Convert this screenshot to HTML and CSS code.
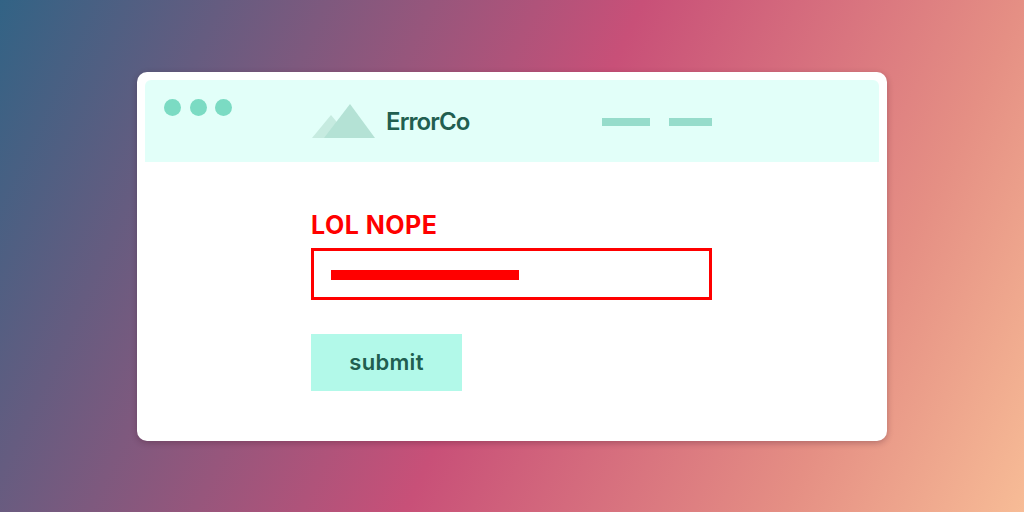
FILE: index.html
```html
<!DOCTYPE html>
<html lang="en">
<head>
    <meta charset="UTF-8">
    <title>ErrorCo</title>
    <link rel="stylesheet" href="styles.css">
</head>
<body>
    <div class="window">
        <div class="header">
            <div class="dots">
                <span class="dot"></span>
                <span class="dot"></span>
                <span class="dot"></span>
            </div>
            <div class="brand">
                <svg class="logo" width="63" height="34" viewBox="0 0 63 34">
                    <polygon points="0,34 19,11 38,34" fill="#c6ebe0"/>
                    <polygon points="12,34 38,0 63,34" fill="#b4e2d5"/>
                </svg>
                <span class="brand-name">ErrorCo</span>
            </div>
            <div class="nav">
                <span class="nav-bar nav-bar-long"></span>
                <span class="nav-bar nav-bar-short"></span>
            </div>
        </div>
        <div class="content">
            <div class="error-label">LOL NOPE</div>
            <div class="input-box">
                <div class="input-value"></div>
            </div>
            <button class="button-submit">submit</button>
        </div>
    </div>
</body>
</html>
```

FILE: styles.css
```css
html, body {
    margin: 0;
    height: 100%;
}
body {
    width: 1024px;
    height: 512px;
    overflow: hidden;
    box-sizing: border-box;
    padding: 72px 137px 0;
    font-family: Inter, "Liberation Sans", sans-serif;
    background: linear-gradient(115deg, #326385 0%, #655c80 17.5%, #c85078 51%, #e58f84 81%, #f7bc96 100%);
}
.window {
    width: 750px;
    height: 369px;
    box-sizing: border-box;
    padding: 8px;
    background-color: white;
    border-radius: 10px;
    box-shadow: 0 2px 6px rgba(60, 20, 40, 0.3);
}
.header {
    display: flex;
    height: 82px;
    background-color: #e2fff9;
    border-radius: 6px 6px 0 0;
}
.dots {
    display: flex;
    gap: 8.5px;
    width: 148px;
    padding: 19px 0 0 19px;
}
.dot {
    width: 17px;
    height: 17px;
    border-radius: 50%;
    background-color: #7bdbc3;
}
.brand {
    display: flex;
    align-items: flex-start;
    width: 290px;
    padding-top: 24px;
}
.logo {
    display: block;
}
.brand-name {
    margin: 3px 0 0 11px;
    color: #215e50;
    font-size: 24px;
    line-height: 29px;
    font-weight: 600;
    letter-spacing: -0.9px;
}
.nav {
    display: flex;
    gap: 19px;
    padding-top: 38px;
}
.nav-bar {
    height: 8px;
    background-color: #96dccb;
}
.nav-bar-long { width: 48px; }
.nav-bar-short { width: 43px; }
.content {
    padding: 48px 0 0 166px;
}
.error-label {
    color: #ff0000;
    font-size: 25px;
    line-height: 30px;
    font-weight: 700;
    letter-spacing: 0.5px;
}
.input-box {
    width: 401px;
    height: 52px;
    margin-top: 8px;
    box-sizing: border-box;
    border: 3px solid #ff0000;
    padding: 19px 0 0 17px;
}
.input-value {
    width: 188px;
    height: 10px;
    background-color: #ff0000;
}
.button-submit {
    display: block;
    width: 151px;
    height: 57px;
    margin-top: 34px;
    padding: 0 0 1px;
    border: none;
    background-color: #b2f9e9;
    color: #215e50;
    font-family: inherit;
    font-size: 22px;
    font-weight: 600;
    letter-spacing: 0.3px;
}
```
